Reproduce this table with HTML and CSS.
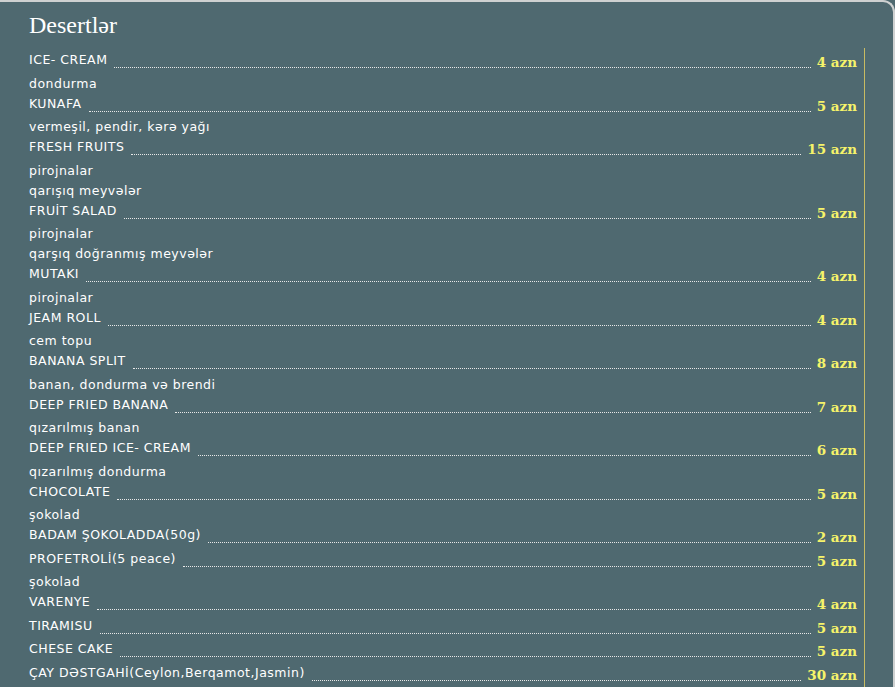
FILE: index.html
```html
<!DOCTYPE html>
<html lang="az">
<head>
  <meta charset="UTF-8" />
  <meta name="viewport" content="width=device-width, initial-scale=1.0" />
  <title>Desertlər</title>
  <link rel="stylesheet" href="styles.css">
</head>
<body>
  <div class="menu">
    <h1>Desertlər</h1>

    <div class="list">
      <div class="item"><span class="name">ICE- CREAM</span><span class="dots"></span><span class="price">4 azn</span></div>
      <div class="desc">dondurma</div>
      <div class="item"><span class="name">KUNAFA</span><span class="dots"></span><span class="price">5 azn</span></div>
      <div class="desc">vermeşil, pendir, kərə yağı</div>
      <div class="item"><span class="name">FRESH FRUITS</span><span class="dots"></span><span class="price">15 azn</span></div>
      <div class="desc">pirojnalar</div>
      <div class="desc">qarışıq meyvələr</div>
      <div class="item"><span class="name">FRUİT SALAD</span><span class="dots"></span><span class="price">5 azn</span></div>
      <div class="desc">pirojnalar</div>
      <div class="desc">qarşıq doğranmış meyvələr</div>
      <div class="item"><span class="name">MUTAKI</span><span class="dots"></span><span class="price">4 azn</span></div>
      <div class="desc">pirojnalar</div>
      <div class="item"><span class="name">JEAM ROLL</span><span class="dots"></span><span class="price">4 azn</span></div>
      <div class="desc">cem topu</div>
      <div class="item"><span class="name">BANANA SPLIT</span><span class="dots"></span><span class="price">8 azn</span></div>
      <div class="desc">banan, dondurma və brendi</div>
      <div class="item"><span class="name">DEEP FRIED BANANA</span><span class="dots"></span><span class="price">7 azn</span></div>
      <div class="desc">qızarılmış banan</div>
      <div class="item"><span class="name">DEEP FRIED ICE- CREAM</span><span class="dots"></span><span class="price">6 azn</span></div>
      <div class="desc">qızarılmış dondurma</div>
      <div class="item"><span class="name">CHOCOLATE</span><span class="dots"></span><span class="price">5 azn</span></div>
      <div class="desc">şokolad</div>
      <div class="item"><span class="name">BADAM ŞOKOLADDA(50g)</span><span class="dots"></span><span class="price">2 azn</span></div>
      <div class="item"><span class="name">PROFETROLİ(5 peace)</span><span class="dots"></span><span class="price">5 azn</span></div>
      <div class="desc">şokolad</div>
      <div class="item"><span class="name">VARENYE</span><span class="dots"></span><span class="price">4 azn</span></div>
      <div class="item"><span class="name">TIRAMISU</span><span class="dots"></span><span class="price">5 azn</span></div>
      <div class="item"><span class="name">CHESE CAKE</span><span class="dots"></span><span class="price">5 azn</span></div>
      <div class="item"><span class="name">ÇAY DƏSTGAHİ(Ceylon,Berqamot,Jasmin)</span><span class="dots"></span><span class="price">30 azn</span></div>
    </div>
  </div>
</body>
</html>
```

FILE: styles.css
```css
html, body {
  margin: 0;
  padding: 0;
  background-color: #4f6970;
}
body {
  font-family: "DejaVu Sans", Verdana, sans-serif;
  color: #ffffff;
}
.menu {
  box-sizing: border-box;
  height: 687px;
  display: flex;
  flex-direction: column;
  border-top: 2px solid #cfd1d1;
  border-right: 2px solid #cfd1d1;
  border-top-right-radius: 12px;
  overflow: hidden;
}
h1 {
  margin: 0 0 9px 29px;
  padding-top: 9px;
  font-family: "Liberation Serif", "Times New Roman", serif;
  font-weight: normal;
  font-size: 24px;
  line-height: 28px;
  color: #ffffff;
}
.list {
  flex: 1 0 auto;
  margin-left: 29px;
  width: 828px;
  padding: 2px 7px 0 0;
  border-right: 1px solid #c9bb62;
}
.item {
  display: flex;
  align-items: flex-end;
  height: 20px;
  margin-bottom: 3.5px;
}
.name,
.desc {
  font-size: 12.5px;
  line-height: 20px;
  letter-spacing: 0.5px;
  white-space: nowrap;
}
.dots {
  flex: 1;
  margin: 0 6px 2px 7px;
  border-bottom: 1px dotted #e8e8e8;
}
.price {
  font-family: "DejaVu Serif", Georgia, serif;
  font-weight: bold;
  font-size: 13.5px;
  line-height: 15px;
  color: #f6f36a;
  white-space: nowrap;
}
```
